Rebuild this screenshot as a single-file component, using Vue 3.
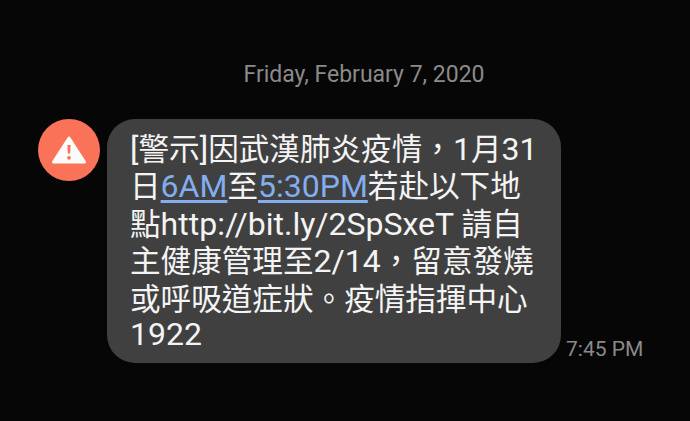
<template>
  <div class="screen">
    <div class="date">Friday, February 7, 2020</div>
    <div class="row">
      <div class="avatar">
        <svg width="34" height="28" viewBox="0 0 34 28">
          <path d="M17 2 L32.5 26 H1.5 Z" fill="#fbfbfb" stroke="#fbfbfb" stroke-width="3" stroke-linejoin="round" />
          <path d="M15.4 9 H18.6 L18.2 17.5 H15.8 Z" fill="#fa7358" />
          <circle cx="17" cy="21.8" r="1.9" fill="#fa7358" />
        </svg>
      </div>
      <div class="bubble">
        <div><span class="en">[</span>警示<span class="en">]</span>因武漢肺炎疫情，<span class="en">1</span>月<span class="en">31</span></div>
        <div>日<a class="link en">6AM</a>至<a class="link en">5:30PM</a>若赴以下地</div>
        <div>點<span class="en">http://bit.ly/2SpSxeT </span>請自</div>
        <div>主健康管理至<span class="en">2/14</span>，留意發燒</div>
        <div>或呼吸道症狀。疫情指揮中心</div>
        <div class="en">1922</div>
      </div>
      <div class="time">7:45 PM</div>
    </div>
  </div>
</template>

<script setup>
</script>

<style>
html,
body {
  margin: 0;
  background: #060606;
}
</style>

<style scoped>
.screen {
  width: 690px;
  height: 421px;
  background: #060606;
  overflow: hidden;
  font-family: Roboto, "Noto Sans CJK TC", sans-serif;
  box-sizing: border-box;
  padding-top: 61px;
}

.date {
  text-align: center;
  color: #8a8a8a;
  font-size: 23px;
  line-height: 27px;
  margin-left: 38px;
}

.row {
  display: flex;
  align-items: flex-start;
  margin-top: 31px;
  padding-left: 38px;
}

.avatar {
  width: 62px;
  height: 62px;
  border-radius: 50%;
  background: #fa7358;
  display: flex;
  align-items: center;
  justify-content: center;
  flex-shrink: 0;
}

.bubble {
  width: 454px;
  height: 244px;
  box-sizing: border-box;
  margin-left: 7px;
  padding: 12px 0 0 23px;
  background: #404040;
  border-radius: 28px;
  color: #f4f4f4;
  font-size: 30.6px;
  line-height: 37.4px;
  white-space: nowrap;
}

.en {
  font-size: 32px;
  line-height: 1;
}

.link {
  color: #82aeef;
  text-decoration: underline;
  text-underline-offset: 3px;
}

.time {
  align-self: flex-end;
  margin-left: 5px;
  margin-bottom: 2px;
  color: #8a8a8a;
  font-size: 21px;
  line-height: 24px;
}
</style>
